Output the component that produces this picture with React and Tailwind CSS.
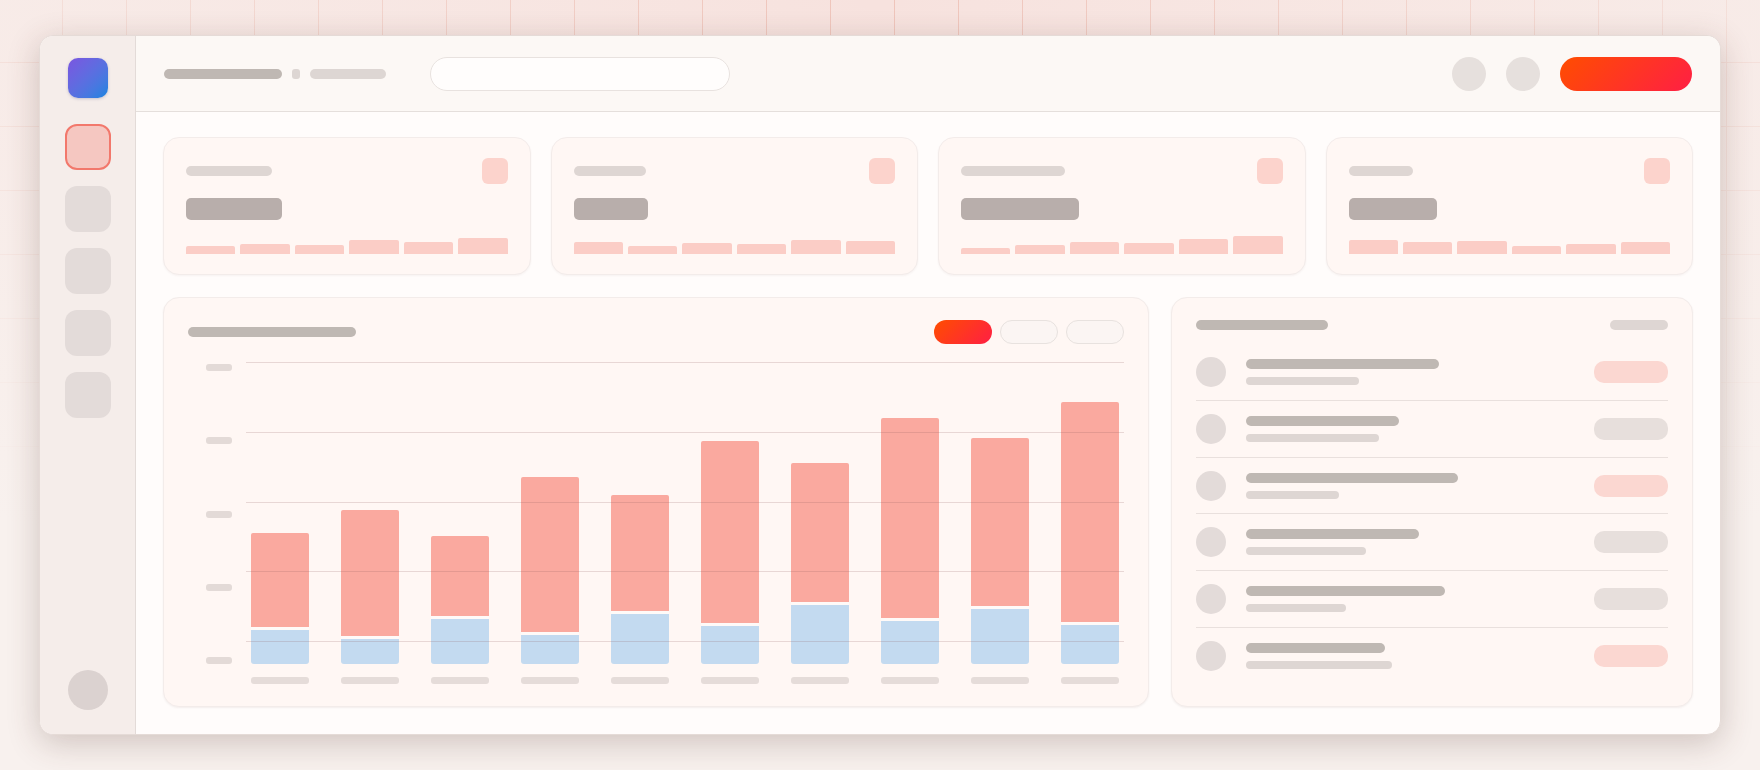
const stats = [
  { label: 86, value: 96, bars: [8, 10, 9, 14, 12, 16] },
  { label: 72, value: 74, bars: [12, 8, 11, 10, 14, 13] },
  { label: 104, value: 118, bars: [6, 9, 12, 11, 15, 18] },
  { label: 64, value: 88, bars: [14, 12, 13, 8, 10, 12] },
];

// red / blue heights in px, read off the chart
const chartBars = [
  [94, 34], [126, 25], [80, 45], [155, 29], [116, 50],
  [182, 38], [139, 59], [200, 43], [168, 55], [220, 39],
];

const rows = [
  { title: 193, sub: 113, hot: true },
  { title: 153, sub: 133, hot: false },
  { title: 212, sub: 93, hot: true },
  { title: 173, sub: 120, hot: false },
  { title: 199, sub: 100, hot: false },
  { title: 139, sub: 146, hot: true },
];

function StatCard({ stat }) {
  return (
    <div className="h-[138px] rounded-[16px] border border-[#f3ecea] bg-[#fff7f4] px-[22px] pt-5 shadow-[0_1px_2px_rgba(90,60,50,0.05)]">
      <div className="flex items-center justify-between">
        <div className="h-2.5 rounded-[5px] bg-[#ded6d3]" style={{ width: stat.label }} />
        <div className="h-[26px] w-[26px] rounded-[6px] bg-[#fcd3cc]" />
      </div>
      <div className="mt-3.5 h-[22px] rounded-[5px] bg-[#b8aeab]" style={{ width: stat.value }} />
      <div className="mt-4 flex h-[18px] items-end gap-[5px]">
        {stat.bars.map((h, i) => (
          <div key={i} className="flex-1 rounded-t-[2px] bg-[#fbcdc6]" style={{ height: h }} />
        ))}
      </div>
    </div>
  );
}

function ChartCard() {
  return (
    <div className="flex h-[410px] flex-col rounded-[16px] border border-[#f3ecea] bg-[#fff7f4] px-6 pt-[22px] shadow-[0_1px_2px_rgba(90,60,50,0.07)]">
      <div className="flex h-6 items-center justify-between">
        <div className="h-2.5 w-[168px] rounded-[5px] bg-[#bfb8b3]" />
        <div className="flex gap-2">
          <div className="h-6 w-[58px] rounded-full bg-[linear-gradient(135deg,#ff4d00,#ff1f44)]" />
          <div className="h-6 w-[58px] rounded-full border border-[#e8e2df] bg-[#fbf5f3]" />
          <div className="h-6 w-[58px] rounded-full border border-[#e8e2df] bg-[#fbf5f3]" />
        </div>
      </div>
      <div className="mt-[18px] flex gap-3.5">
        <div className="flex h-[302px] w-11 flex-col items-end justify-between pt-0.5">
          {[0, 1, 2, 3, 4].map((i) => (
            <div key={i} className="h-[7px] w-[26px] rounded-[3px] bg-[#e3dad7]" />
          ))}
        </div>
        <div className="flex-1">
          <div className="relative flex h-[302px] items-end gap-8 px-[5px]">
            {chartBars.map(([red, blue], i) => (
              <div key={i} className="flex-1">
                <div className="rounded-t-[2px] bg-[#faa99f]" style={{ height: red }} />
                <div className="box-content rounded-b-[3px] border-t-[3px] border-[#fffaf8] bg-[#c3daf0] bg-clip-padding" style={{ height: blue }} />
              </div>
            ))}
            <div className="absolute inset-x-0 top-0 flex h-[280px] flex-col justify-between">
              {[0, 1, 2, 3, 4].map((i) => (
                <div key={i} className="h-px bg-[#8a5a5a]/20" />
              ))}
            </div>
          </div>
          <div className="mt-[13px] flex gap-8 px-[5px]">
            {chartBars.map((_, i) => (
              <div key={i} className="h-[7px] flex-1 rounded-[3px] bg-[#e5dcd9]" />
            ))}
          </div>
        </div>
      </div>
    </div>
  );
}

function ListCard() {
  return (
    <div className="flex h-[410px] flex-col rounded-[16px] border border-[#f3ecea] bg-[#fff7f4] px-6 pb-[22px] pt-[22px] shadow-[0_1px_2px_rgba(90,60,50,0.07)]">
      <div className="flex items-center justify-between">
        <div className="h-2.5 w-[132px] rounded-[5px] bg-[#bfb8b3]" />
        <div className="h-2.5 w-[58px] rounded-[5px] bg-[#ded6d3]" />
      </div>
      <div className="mt-3.5 flex flex-1 flex-col">
        {rows.map((row, i) => (
          <div key={i} className="flex flex-1 items-center border-b border-[#e9e0dd] last:border-b-0">
            <div className="h-[30px] w-[30px] rounded-full bg-[#e3dbd9]" />
            <div className="ml-5 flex-1">
              <div className="h-2.5 rounded-[5px] bg-[#bfb8b3]" style={{ width: row.title }} />
              <div className="mt-2 h-2 rounded-[4px] bg-[#ded6d3]" style={{ width: row.sub }} />
            </div>
            <div className={row.hot ? 'h-[22px] w-[74px] rounded-[10px] bg-[#fbd7d1]' : 'h-[22px] w-[74px] rounded-[10px] bg-[#e7dfdc]'} />
          </div>
        ))}
      </div>
    </div>
  );
}

export default function App() {
  return (
    <div className="h-screen overflow-hidden bg-[#f7e2de] bg-[image:radial-gradient(ellipse_1500px_640px_at_50%_0%,rgba(248,241,238,0)_0%,rgba(248,241,238,0.4)_40%,rgba(248,241,238,0.8)_75%,#f8f1ee_100%),linear-gradient(to_right,#efc4ba_1px,transparent_1px),linear-gradient(to_bottom,#efc4ba_1px,transparent_1px)] bg-[size:auto,64px_64px,64px_64px] bg-[position:0_0,62px_0,0_62px] px-[39px] pt-[35px]">
      <div className="flex h-[700px] overflow-hidden rounded-[14px] border border-[#e5dbd7] bg-[#fffcfb] shadow-[0_8px_32px_rgba(80,50,40,0.24)]">
        <aside className="flex w-24 shrink-0 flex-col items-center border-r border-[#e3dbd8] bg-[#f5edea] pb-6 pl-px pt-[22px]">
          <div className="h-10 w-10 rounded-[10px] bg-gradient-to-br from-[#7a55e0] to-[#0a84e0] shadow-[0_1px_3px_rgba(60,60,120,0.25)]" />
          <div className="mt-[26px] h-[46px] w-[46px] rounded-xl border-2 border-[#f2786c] bg-[#f5c7c1]" />
          <div className="mt-4 h-[46px] w-[46px] rounded-xl bg-[#e3dbd9]" />
          <div className="mt-4 h-[46px] w-[46px] rounded-xl bg-[#e3dbd9]" />
          <div className="mt-4 h-[46px] w-[46px] rounded-xl bg-[#e3dbd9]" />
          <div className="mt-4 h-[46px] w-[46px] rounded-xl bg-[#e3dbd9]" />
          <div className="mt-auto h-10 w-10 rounded-full bg-[#dbd2d0]" />
        </aside>
        <div className="flex min-w-0 flex-1 flex-col">
          <header className="flex h-[76px] shrink-0 items-center border-b border-[#e5dfdc] bg-[#fcf8f5] px-7 pt-px">
            <div className="h-2.5 w-[118px] rounded-[5px] bg-[#bfb8b3]" />
            <div className="ml-2.5 h-2.5 w-2 rounded-[3px] bg-[#ddd6d3]" />
            <div className="ml-2.5 h-2.5 w-[76px] rounded-[5px] bg-[#ddd6d3]" />
            <div className="ml-11 h-[34px] w-[300px] rounded-full border border-[#e8e2df] bg-[#fffdfc]" />
            <div className="ml-auto h-[34px] w-[34px] rounded-full bg-[#e6e0dd]" />
            <div className="ml-5 h-[34px] w-[34px] rounded-full bg-[#e6e0dd]" />
            <div className="ml-5 h-[34px] w-[132px] rounded-full bg-[linear-gradient(135deg,#ff4d00,#ff1f44)]" />
          </header>
          <main className="flex-1 px-[27px] pt-[25px]">
            <div className="grid grid-cols-4 gap-5">
              {stats.map((stat, i) => (
                <StatCard key={i} stat={stat} />
              ))}
            </div>
            <div className="mt-[22px] grid grid-cols-[986px_1fr] gap-[22px]">
              <ChartCard />
              <ListCard />
            </div>
          </main>
        </div>
      </div>
    </div>
  );
}
